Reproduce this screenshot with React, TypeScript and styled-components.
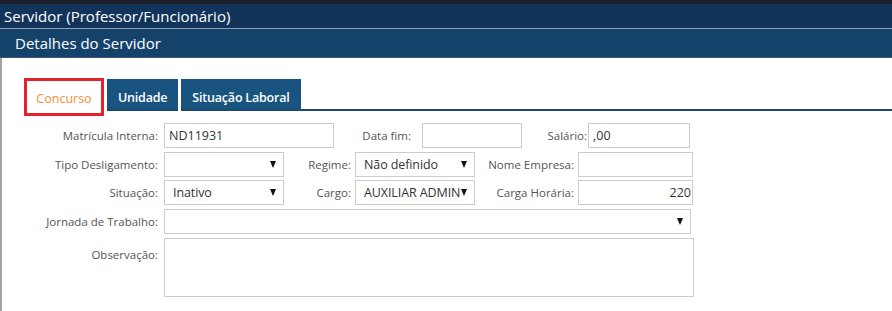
import styled, { createGlobalStyle } from 'styled-components'

const GlobalStyle = createGlobalStyle`
  html, body {
    margin: 0;
    padding: 0;
    background: #ffffff;
    font-family: "Open Sans", "Noto Sans", sans-serif;
  }
`;

const Page = styled.div`
  width: 892px;
  height: 311px;
  overflow: hidden;
  background: #ffffff;
`;

const TopStrip = styled.div`
  height: 4px;
  background: #1e202b;
`;

const TitleBar = styled.div`
  height: 25px;
  display: flex;
  align-items: center;
  padding-left: 4px;
  padding-bottom: 1px;
  box-sizing: border-box;
  background: #12345a;
  border-bottom: 1px solid #8a9fb6;
  color: #ffffff;
  font-size: 15px;
`;

const SectionBar = styled.div`
  height: 28px;
  display: flex;
  align-items: center;
  padding-left: 15px;
  background: #15426b;
  border-bottom: 1px solid #3b5675;
  color: #ffffff;
  font-size: 15px;
`;

const Panel = styled.div`
  border-left: 2px solid #a3a3a3;
  height: 260px;
  padding-top: 21px;
`;

const TabBar = styled.div`
  display: flex;
  align-items: flex-start;
  height: 32px;
  padding-left: 22px;
`;

const Tab = styled.div<{ $active?: boolean }>`
  position: relative;
  box-sizing: border-box;
  display: flex;
  align-items: center;
  justify-content: center;
  margin-right: 3px;
  font-size: 12.5px;
  ${({ $active }) =>
    $active
      ? `
    height: 38px;
    width: 80px;
    margin-top: -1px;
    padding-top: 2px;
    background: #ffffff;
    border: 3px solid #e8202b;
    color: #ef8e37;
    z-index: 1;
  `
      : `
    height: 32px;
    margin-top: 0;
    padding: 6px 11px 0;
    background: #195480;
    border-bottom: 2px solid #1a4a72;
    color: #ffffff;
    font-weight: 600;
    letter-spacing: -0.2px;
  `}
`;

const TabLine = styled.div`
  flex: 1;
  align-self: stretch;
  border-bottom: 2px solid #1a4a72;
  margin-left: -3px;
`;

const Form = styled.div`
  display: flex;
  flex-direction: column;
  gap: 3.5px;
  margin-top: 12px;
  padding-left: 8px;
`;

const Row = styled.div<{ $top?: boolean }>`
  display: flex;
  align-items: ${({ $top }) => ($top ? 'flex-start' : 'center')};
  margin-top: ${({ $top }) => ($top ? '1px' : '0')};
`;

const Label = styled.div<{ $w: number; $gap: number; $pt?: number }>`
  width: ${({ $w }) => $w}px;
  margin-right: ${({ $gap }) => $gap}px;
  padding-top: ${({ $pt }) => $pt || 0}px;
  box-sizing: border-box;
  text-align: right;
  white-space: nowrap;
  font-size: 11.5px;
  color: #555555;
`;

const Input = styled.div<{ $w: number; $right?: boolean }>`
  box-sizing: border-box;
  width: ${({ $w }) => $w}px;
  height: 25px;
  display: flex;
  align-items: center;
  justify-content: ${({ $right }) => ($right ? 'flex-end' : 'flex-start')};
  padding: ${({ $right }) => ($right ? '0 1px 0 4px' : '0 4px')};
  border: 1px solid #cccccc;
  background: #ffffff;
  font-size: 12.5px;
  color: #333333;
`;

const Select = styled.div<{ $w: number }>`
  position: relative;
  box-sizing: border-box;
  width: ${({ $w }) => $w}px;
  height: 25px;
  display: flex;
  align-items: center;
  padding: 0 8px;
  border: 1px solid #cccccc;
  background: #ffffff;
  font-size: 12.5px;
  color: #333333;
  overflow: hidden;
`;

const SelectValue = styled.span`
  white-space: nowrap;
  letter-spacing: -0.1px;
`;

const Arrow = styled.span`
  position: absolute;
  right: 7px;
  top: 8px;
  width: 0;
  height: 0;
  border-left: 3.5px solid transparent;
  border-right: 3.5px solid transparent;
  border-top: 7px solid #111111;
`;

const TextArea = styled.div<{ $w: number }>`
  box-sizing: border-box;
  width: ${({ $w }) => $w}px;
  height: 59px;
  border: 1px solid #cccccc;
  background: #ffffff;
`;

const Dropdown = ({ w, value }: { w: number; value?: string }) => (
  <Select $w={w}>
    <SelectValue>{value}</SelectValue>
    <Arrow />
  </Select>
);

export default function App() {
  return (
    <Page>
      <GlobalStyle />
      <TopStrip />
      <TitleBar>Servidor (Professor/Funcionário)</TitleBar>
      <SectionBar>Detalhes do Servidor</SectionBar>
      <Panel>
        <TabBar>
          <Tab $active>Concurso</Tab>
          <Tab>Unidade</Tab>
          <Tab>Situação Laboral</Tab>
          <TabLine />
        </TabBar>
        <Form>
          <Row>
            <Label $w={148} $gap={6}>Matrícula Interna:</Label>
            <Input $w={170}>ND11931</Input>
            <Label $w={77} $gap={11}>Data fim:</Label>
            <Input $w={100} />
            <Label $w={65} $gap={1}>Salário:</Label>
            <Input $w={102}>,00</Input>
          </Row>
          <Row>
            <Label $w={148} $gap={6}>Tipo Desligamento:</Label>
            <Dropdown w={120} />
            <Label $w={67} $gap={4}>Regime:</Label>
            <Dropdown w={120} value="Não definido" />
            <Label $w={99} $gap={4}>Nome Empresa:</Label>
            <Input $w={115} />
          </Row>
          <Row>
            <Label $w={148} $gap={6}>Situação:</Label>
            <Dropdown w={120} value="Inativo" />
            <Label $w={67} $gap={4}>Cargo:</Label>
            <Dropdown w={120} value="AUXILIAR ADMIN" />
            <Label $w={99} $gap={4}>Carga Horária:</Label>
            <Input $w={115} $right>220</Input>
          </Row>
          <Row>
            <Label $w={148} $gap={6}>Jornada de Trabalho:</Label>
            <Dropdown w={527} />
          </Row>
          <Row $top>
            <Label $w={148} $gap={6} $pt={9}>Observação:</Label>
            <TextArea $w={530} />
          </Row>
        </Form>
      </Panel>
    </Page>
  );
}
